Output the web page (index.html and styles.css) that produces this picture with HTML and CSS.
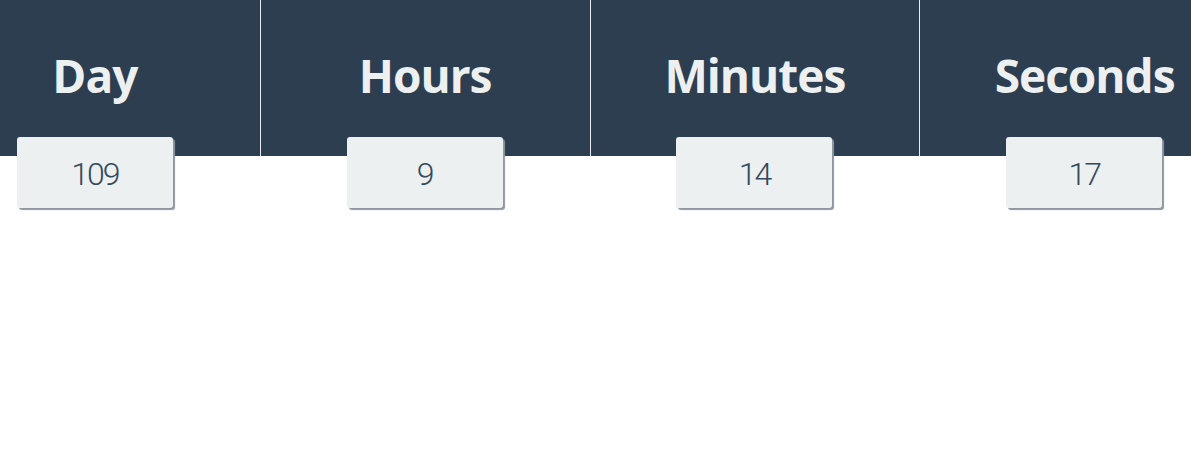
FILE: index.html
```html
<!DOCTYPE html>
<html lang="en">
<head>
<meta charset="utf-8">
<title>Countdown</title>
<link rel="stylesheet" href="styles.css">
</head>
<body>
<div class="countdown">
  <div class="unit">
    <div class="unit-head"><h2 class="unit-label">Day</h2></div>
    <div class="unit-value">109</div>
  </div>
  <div class="unit">
    <div class="unit-head"><h2 class="unit-label">Hours</h2></div>
    <div class="unit-value">9</div>
  </div>
  <div class="unit">
    <div class="unit-head"><h2 class="unit-label">Minutes</h2></div>
    <div class="unit-value">14</div>
  </div>
  <div class="unit">
    <div class="unit-head"><h2 class="unit-label">Seconds</h2></div>
    <div class="unit-value">17</div>
  </div>
</div>
</body>
</html>
```
FILE: styles.css
```css
html {
  margin: 0;
  padding: 0;
}

body {
  margin: 0;
  padding: 0;
  background: #ffffff;
  overflow: hidden;
}

.countdown {
  display: grid;
  grid-template-columns: repeat(4, 329.75px);
  width: 1319px;
  margin-left: -70px;
  padding-bottom: 10px;
}

.unit {
  display: flex;
  flex-direction: column;
  align-items: center;
}

.unit + .unit .unit-head {
  border-left: 1px solid #e8ecef;
}

.unit-head {
  align-self: stretch;
  height: 156px;
  background: #2d3e50;
  display: flex;
  justify-content: center;
  box-sizing: border-box;
}

.unit-label {
  margin: 48px 0 0;
  font-family: "Open Sans", "DejaVu Sans", sans-serif;
  font-weight: 700;
  font-size: 46px;
  line-height: 54px;
  color: #ecf0f1;
  letter-spacing: -1px;
}

.unit-value {
  margin-top: -19px;
  width: 156px;
  height: 71px;
  box-sizing: border-box;
  padding-top: 2px;
  background: #ecf0f1;
  border-radius: 3px;
  box-shadow: 2px 2px 1px #8e979f;
  display: flex;
  align-items: center;
  justify-content: center;
  font-family: "Roboto", "DejaVu Sans Condensed", sans-serif;
  font-weight: 300;
  font-size: 32px;
  letter-spacing: -2px;
  color: #34495e;
}
```
